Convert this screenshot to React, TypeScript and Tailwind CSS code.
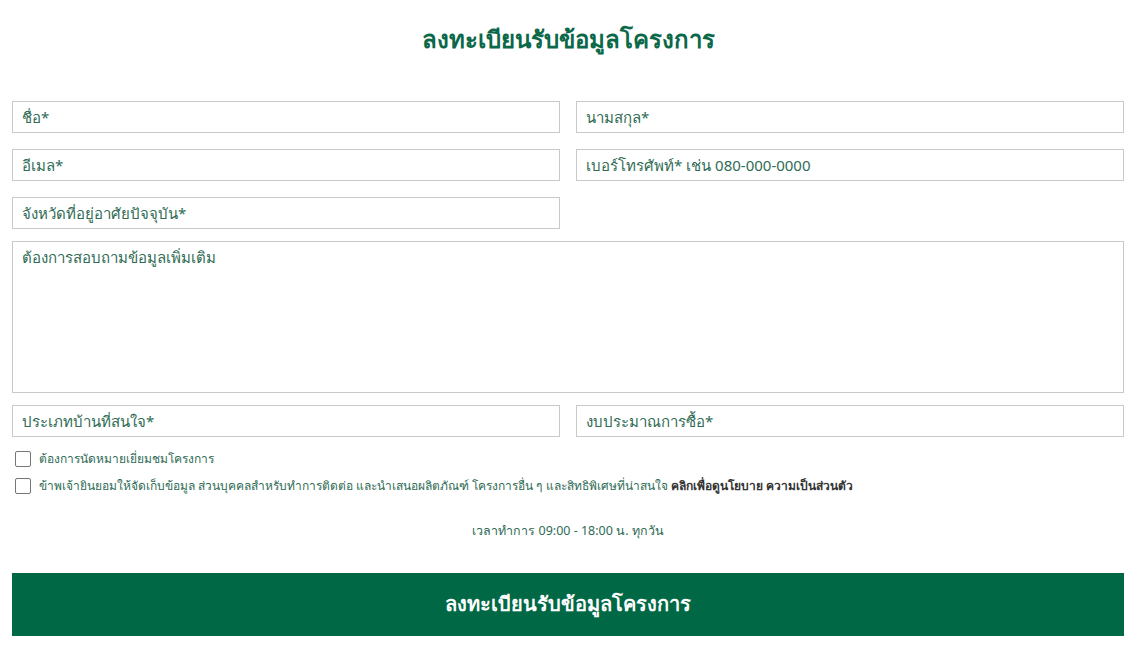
export default function App() {
  const input =
    "h-8 w-full border border-[#c9c9c9] bg-white px-[9px] text-[15px] text-[#2f6b55] placeholder:text-[#2f6b55] outline-none";

  return (
    <div className="min-h-[648px] bg-white font-['Noto_Sans',sans-serif] text-[#2f6b55]">
      <div className="pl-[12px] pr-[13px] pt-[20px]">
        <h1 className="text-center text-[24px] font-bold leading-[38px] text-[#0b6848]">
          ลงทะเบียนรับข้อมูลโครงการ
        </h1>

        <form className="mt-[43px] flex flex-col">
          <div className="grid grid-cols-2 gap-x-4 gap-y-[16px]">
            <input className={input} placeholder="ชื่อ*" />
            <input className={input} placeholder="นามสกุล*" />
            <input className={input} placeholder="อีเมล*" />
            <input className={input} placeholder="เบอร์โทรศัพท์* เช่น 080-000-0000" />
            <input className={input} placeholder="จังหวัดที่อยู่อาศัยปัจจุบัน*" />
          </div>

          <textarea
            className="mt-[12px] h-[152px] w-full resize-none border border-[#c9c9c9] px-[9px] py-[4px] text-[15px] text-[#2f6b55] placeholder:text-[#2f6b55] outline-none"
            placeholder="ต้องการสอบถามข้อมูลเพิ่มเติม"
          />

          <div className="mt-[12px] grid grid-cols-2 gap-x-4">
            <input className={input} placeholder="ประเภทบ้านที่สนใจ*" />
            <input className={input} placeholder="งบประมาณการซื้อ*" />
          </div>

          <div className="mt-[13px] flex flex-col gap-[9px] pl-[3px] text-[12px]">
            <label className="flex items-center gap-[8px]">
              <span className="h-[16px] w-[16px] rounded-[2px] border border-[#767676] bg-white" />
              <span>ต้องการนัดหมายเยี่ยมชมโครงการ</span>
            </label>
            <label className="flex items-center gap-[8px]">
              <span className="h-[16px] w-[16px] rounded-[2px] border border-[#767676] bg-white" />
              <span>
                ข้าพเจ้ายินยอมให้จัดเก็บข้อมูล ส่วนบุคคลสำหรับทำการติดต่อ และนำเสนอผลิตภัณฑ์ โครงการอื่น ๆ และสิทธิพิเศษที่น่าสนใจ{" "}
                <a className="font-bold text-[#333333]">คลิกเพื่อดูนโยบาย ความเป็นส่วนตัว</a>
              </span>
            </label>
          </div>

          <p className="mt-[27px] text-center text-[12.5px]">เวลาทำการ 09:00 - 18:00 น. ทุกวัน</p>

          <button
            type="button"
            className="mt-[32px] h-[63px] w-full bg-[#006845] text-[20px] font-semibold text-white"
          >
            ลงทะเบียนรับข้อมูลโครงการ
          </button>
        </form>
      </div>
    </div>
  );
}
